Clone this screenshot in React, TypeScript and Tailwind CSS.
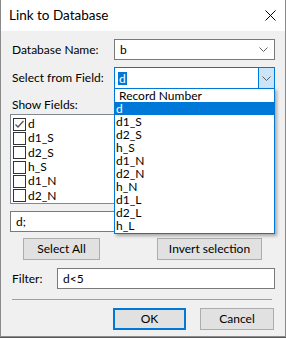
import React from "react";

const showFields = ["d", "d1_S", "d2_S", "h_S", "d1_N", "d2_N"];
const fieldOptions = [
  "Record Number",
  "d",
  "d1_S",
  "d2_S",
  "h_S",
  "d1_N",
  "d2_N",
  "h_N",
  "d1_L",
  "d2_L",
  "h_L",
];

function Chevron() {
  return (
    <svg width="9" height="5" viewBox="0 0 9 5">
      <path d="M0.5 0.5 L4.5 4.5 L8.5 0.5" fill="none" stroke="#606060" strokeWidth="1" />
    </svg>
  );
}

export default function App() {
  return (
    <div className="h-[338px] w-[286px] bg-[#5a5a5a] font-['Segoe_UI',Lato,sans-serif] text-[12px] text-black">
      <div className="relative flex h-[337px] w-[286px] flex-col border-x border-b border-[#8a8a8a] bg-[#f0f0f0]">
        {/* title bar */}
        <div className="flex h-[31px] items-center justify-between bg-white pl-[8px] pr-[9px]">
          <span className="text-[13.5px]">Link to Database</span>
          <svg width="11" height="11" viewBox="0 0 11 11">
            <path d="M0.5 0.5 L10.5 10.5 M10.5 0.5 L0.5 10.5" stroke="#000" strokeWidth="1" />
          </svg>
        </div>

        <div className="flex flex-col pl-[9px] pr-[10px]">
          {/* Database Name */}
          <div className="mt-[8px] flex h-[21px] items-center">
            <span className="ml-[2px] w-[102px]">Database Name:</span>
            <div className="flex h-full flex-1 items-center justify-between border border-[#7a7a7a] bg-white pl-[5px] pr-[6px]">
              <span>b</span>
              <Chevron />
            </div>
          </div>

          {/* Select from Field */}
          <div className="mt-[7px] flex h-[22px] items-center">
            <span className="ml-[2px] w-[102px]">Select from Field:</span>
            <div className="flex h-full flex-1 items-center border border-[#0078d7] bg-white">
              <div className="flex flex-1 items-center pl-[3px]">
                <span className="bg-[#0078d7] px-[1px] leading-[13px] text-white">d</span>
              </div>
              <div className="flex h-full w-[16px] items-center justify-center border-l border-[#0078d7] bg-[#cce4f7]">
                <Chevron />
              </div>
            </div>
          </div>

          {/* Show Fields */}
          <span className="ml-[2px] mt-[8px] h-[15px] leading-[15px]">Show Fields:</span>
          <div className="mt-[2px] flex h-[90px] flex-col border border-[#828790] bg-white pl-[2px] pt-[2px]">
            {showFields.map((f, i) => (
              <div key={f} className="flex h-[14.4px] items-center">
                <div className="flex h-[13px] w-[13px] items-center justify-center border border-[#333333] bg-white">
                  {i === 0 && (
                    <svg width="11" height="11" viewBox="0 0 11 11">
                      <path d="M1.5 5.5 L4 8 L9.5 2" fill="none" stroke="#555" strokeWidth="1.3" />
                    </svg>
                  )}
                </div>
                <span className="ml-[2px] leading-[14px]">{f}</span>
              </div>
            ))}
          </div>

          {/* fields text */}
          <div className="mt-[7px] flex h-[21px] items-center border border-[#7a7a7a] bg-white pl-[5px]">
            d;
          </div>

          {/* buttons */}
          <div className="mt-[6px] flex h-[22px]">
            <button className="ml-[13px] w-[77px] border border-[#adadad] bg-[#e1e1e1]">Select All</button>
            <button className="ml-[57px] w-[105px] border border-[#adadad] bg-[#e1e1e1]">Invert selection</button>
          </div>

          {/* Filter */}
          <div className="mt-[8px] flex h-[21px] items-center">
            <span className="ml-[2px] w-[45px]">Filter:</span>
            <div className="flex h-full flex-1 items-center border border-[#7a7a7a] bg-white pl-[5px]">d&lt;5</div>
          </div>

          <div className="ml-[2px] mr-[3px] mt-[10px] h-px bg-[#a0a0a0]" />

          {/* OK / Cancel */}
          <div className="mt-[8px] flex h-[22px]">
            <button className="ml-[103px] w-[73px] border-2 border-[#0078d7] bg-[#e1e1e1]">OK</button>
            <button className="ml-[14px] w-[74px] border border-[#adadad] bg-[#e1e1e1]">Cancel</button>
          </div>
        </div>

        {/* open dropdown list */}
        <div className="absolute left-[113px] top-[88px] flex h-[146px] w-[161px] flex-col border border-[#0078d7] bg-white shadow-[2px_2px_3px_rgba(0,0,0,0.3)]">
          {fieldOptions.map((o, i) => (
            <div
              key={o}
              className={
                i === 1
                  ? "h-[13px] bg-[#0078d7] pl-[1px] leading-[13px] text-white"
                  : i === 0
                  ? "h-[13px] pl-[4px] leading-[13px]"
                  : "h-[13px] pl-[1px] leading-[13px]"
              }
            >
              {o}
            </div>
          ))}
        </div>
      </div>
    </div>
  );
}
